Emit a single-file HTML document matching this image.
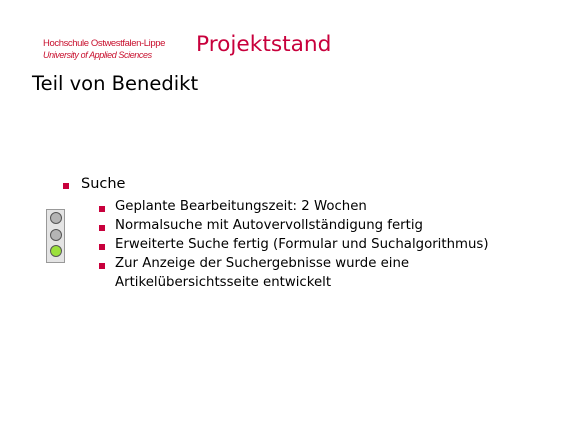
<!DOCTYPE html><html><head><style>
body{margin:0;width:580px;height:435px;background:#fff;position:relative;font-family:"DejaVu Sans","Liberation Sans",sans-serif;overflow:hidden}
.a{position:absolute;white-space:nowrap;line-height:1}
.r{color:#c8102e}
.b{position:absolute;width:6px;height:6px;background:#c8003c}
</style></head><body>
<div class="a r" style="left:43px;top:39px;font-size:9.5px;font-family:'Liberation Sans',sans-serif;letter-spacing:-0.4px">Hochschule Ostwestfalen-Lippe</div>
<div class="a r" style="left:43px;top:51px;font-size:9px;font-style:italic;font-family:'Liberation Sans',sans-serif;letter-spacing:-0.4px">University of Applied Sciences</div>
<div class="a r" style="left:196px;top:34px;font-size:21.7px;color:#c8003c">Projektstand</div>
<div class="a" style="left:32px;top:74px;font-size:19.5px">Teil von Benedikt</div>
<div class="b" style="left:63px;top:183px"></div>
<div class="a" style="left:81px;top:177px;font-size:14.5px">Suche</div>
<div style="position:absolute;left:46px;top:209px;width:19px;height:54px;background:#e4e4e4;border:1px solid #999;box-sizing:border-box"></div>
<div style="position:absolute;left:50px;top:212px;width:12px;height:12px;border-radius:50%;background:#b4b4b4;border:1px solid #555;box-sizing:border-box"></div>
<div style="position:absolute;left:50px;top:229px;width:12px;height:12px;border-radius:50%;background:#b4b4b4;border:1px solid #555;box-sizing:border-box"></div>
<div style="position:absolute;left:50px;top:245px;width:12px;height:12px;border-radius:50%;background:#9be03c;border:1px solid #555;box-sizing:border-box"></div>
<div class="b" style="left:99px;top:206px"></div>
<div class="a" style="left:115px;top:200px;font-size:13.3px">Geplante Bearbeitungszeit: 2 Wochen</div>
<div class="b" style="left:99px;top:225px"></div>
<div class="a" style="left:115px;top:219px;font-size:13.3px">Normalsuche mit Autovervollständigung fertig</div>
<div class="b" style="left:99px;top:244px"></div>
<div class="a" style="left:115px;top:238px;font-size:13.3px">Erweiterte Suche fertig (Formular und Suchalgorithmus)</div>
<div class="b" style="left:99px;top:263px"></div>
<div class="a" style="left:115px;top:257px;font-size:13.3px">Zur Anzeige der Suchergebnisse wurde eine</div>
<div class="a" style="left:115px;top:276px;font-size:13.3px">Artikelübersichtsseite entwickelt</div>
</body></html>
